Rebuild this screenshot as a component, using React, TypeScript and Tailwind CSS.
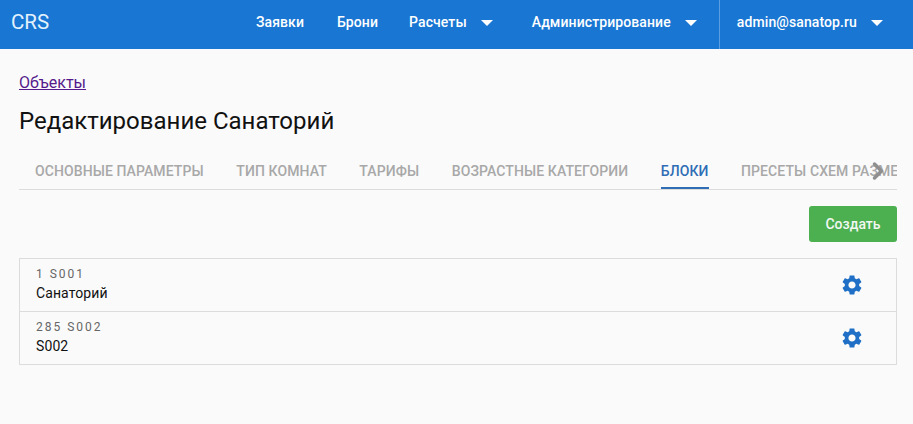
import { ChevronRight } from "lucide-react";

const tabs = ["Основные параметры", "Тип комнат", "Тарифы", "Возрастные категории", "Блоки", "Пресеты схем размещения"];

const rows = [
  { code: "1 S001", name: "Санаторий" },
  { code: "285 S002", name: "S002" },
];

function Caret() {
  return <span className="ml-[14px] mt-[2px] h-0 w-0 border-x-[6px] border-t-[6px] border-x-transparent border-t-white" />;
}

function Gear() {
  return (
    <svg viewBox="0 0 24 24" className="h-6 w-6 fill-[#1e6fc5]">
      <path d="M19.14 12.94c.04-.3.06-.61.06-.94 0-.32-.02-.64-.07-.94l2.03-1.58c.18-.14.23-.41.12-.61l-1.92-3.32c-.12-.22-.37-.29-.59-.22l-2.39.96c-.5-.38-1.03-.7-1.62-.94l-.36-2.54c-.04-.24-.24-.41-.48-.41h-3.84c-.24 0-.43.17-.47.41l-.36 2.54c-.59.24-1.13.57-1.62.94l-2.39-.96c-.22-.08-.47 0-.59.22L2.74 8.87c-.12.21-.08.47.12.61l2.03 1.58c-.05.3-.09.63-.09.94s.02.64.07.94l-2.03 1.58c-.18.14-.23.41-.12.61l1.92 3.32c.12.22.37.29.59.22l2.39-.96c.5.38 1.03.7 1.62.94l.36 2.54c.05.24.24.41.48.41h3.84c.24 0 .44-.17.47-.41l.36-2.54c.59-.24 1.13-.56 1.62-.94l2.39.96c.22.08.47 0 .59-.22l1.92-3.32c.12-.22.07-.47-.12-.61l-2.01-1.58zM12 15.6c-1.98 0-3.6-1.62-3.6-3.6s1.62-3.6 3.6-3.6 3.6 1.62 3.6 3.6-1.62 3.6-3.6 3.6z" />
    </svg>
  );
}

export default function App() {
  return (
    <div className="h-[424px] overflow-hidden bg-[#fafafa] font-['Roboto',sans-serif]">
      <header className="flex h-[49px] items-stretch bg-[#1976d2] pl-[11px] text-white">
        <span className="flex items-center pb-[5px] text-[20.5px] text-[#e3f2fd]">CRS</span>
        <nav className="ml-auto flex h-full items-stretch text-sm font-medium tracking-[0.1px]">
          <span className="mr-[33px] flex items-center pb-[5px]">Заявки</span>
          <span className="mr-[31px] flex items-center pb-[5px]">Брони</span>
          <span className="mr-[39px] flex items-center pb-[5px]">
            Расчеты
            <Caret />
          </span>
          <span className="flex items-center pb-[5px]">
            Администрирование
            <Caret />
          </span>
          <div className="ml-[22px] flex items-center border-l border-[#5a9ee0] pb-[5px] pl-[17px] pr-[30px]">
            admin@sanatop.ru
            <Caret />
          </div>
        </nav>
      </header>

      <main className="pl-[19px] pr-4 pt-[24px]">
        <a className="block text-base leading-5 text-[#551a8b] underline">Объекты</a>
        <h1 className="mt-3 text-[24px] leading-8 text-[#111]">Редактирование Санаторий</h1>

        <div className="relative mt-[18px] border-b border-[#dcdcdc]">
          <div className="flex h-[34px] gap-[32.5px] overflow-hidden whitespace-nowrap pl-4 text-sm font-medium uppercase tracking-[0.1px] text-[#a8a8a8]">
            {tabs.map((tab) => (
              <span
                key={tab}
                className={
                  tab === "Блоки"
                    ? "h-[34px] border-b-2 border-[#2f6db5] pt-[6px] text-[#2f6db5]"
                    : "pt-[6px]"
                }
              >
                {tab}
              </span>
            ))}
          </div>
          <ChevronRight className="absolute right-[5px] top-[2px] h-7 w-7 text-[#8f8f8f]" strokeWidth={3} />
        </div>

        <div className="mt-4 flex justify-end">
          <button className="h-9 w-[88px] rounded-[3px] bg-[#4caf50] text-sm font-medium text-[#f1f8f1]">Создать</button>
        </div>

        <div className="mt-4 border border-[#dcdcdc]">
          {rows.map((row, i) => (
            <div
              key={row.code}
              className={`flex items-center justify-between pl-4 pr-[32px] ${i > 0 ? "h-[53px] border-t border-[#dcdcdc]" : "h-[52px]"}`}
            >
              <div>
                <div className="text-xs leading-4 tracking-[2px] text-[#666]">{row.code}</div>
                <div className="mt-[1px] pb-[1px] text-sm leading-5 tracking-[0.1px] text-[#111]">{row.name}</div>
              </div>
              <Gear />
            </div>
          ))}
        </div>
      </main>
    </div>
  );
}
